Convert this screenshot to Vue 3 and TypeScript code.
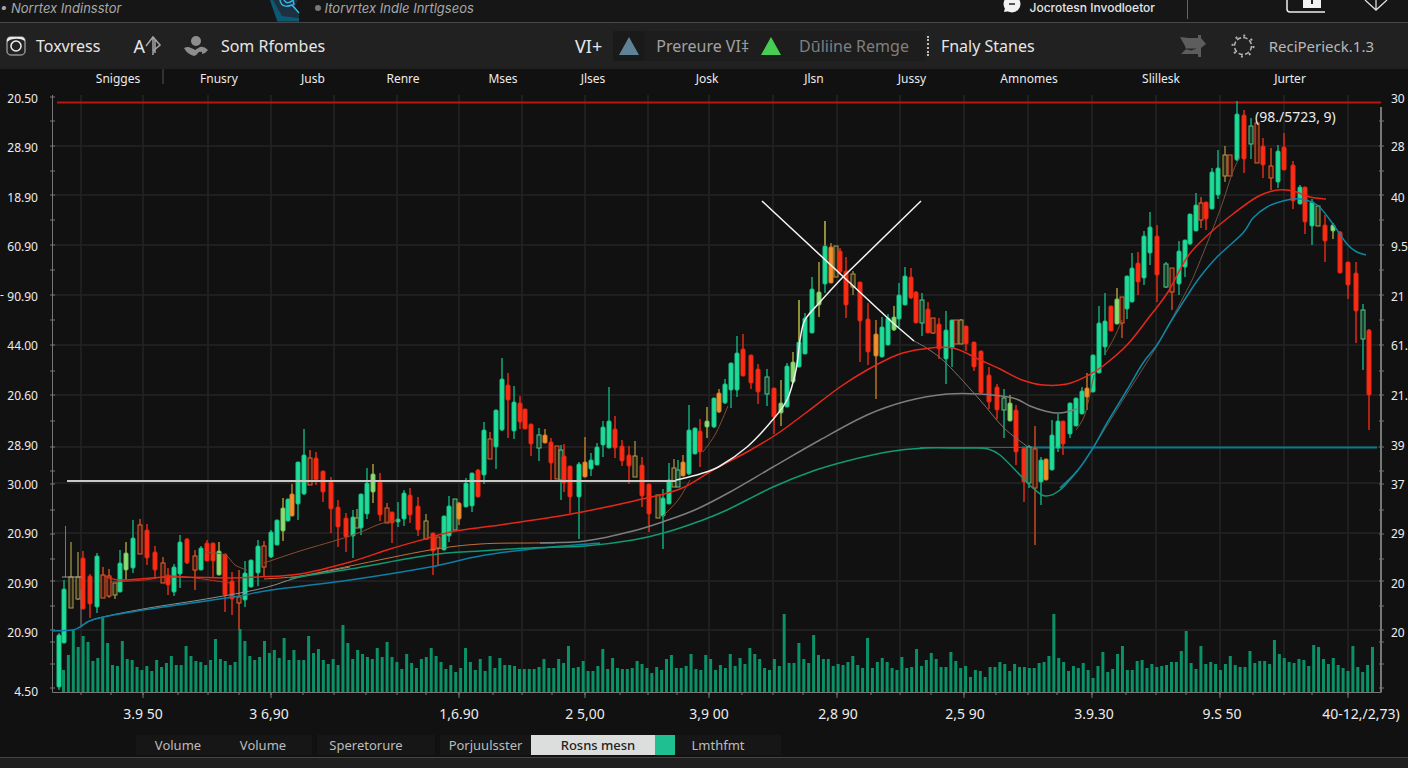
<script setup lang="ts">
type Kind = 'g' | 'r' | 'o' | 'l' | 'h' | 'k' | 'y'
type Candle = [x: number, high: number, top: number, bottom: number, low: number, kind: Kind]
type Point = [number, number]

// g/r: filled up/down, l: lime, o: orange, h/k/y: hollow orange, green, yellow
const candles: Candle[] = [
  [59, 633, 635, 687, 690, 'g'], [64, 580, 589, 643, 643, 'g'], [71, 542, 577, 608, 608, 'y'], [78, 552, 577, 599, 600, 'y'],
  [83, 551, 558, 609, 609, 'r'], [90, 574, 576, 604, 618, 'r'], [97, 553, 556, 607, 613, 'g'], [103, 567, 575, 598, 598, 'h'],
  [109, 569, 576, 596, 598, 'h'], [115, 583, 583, 595, 599, 'y'], [120, 550, 563, 592, 592, 'g'], [126, 542, 553, 570, 580, 'l'],
  [133, 520, 538, 568, 573, 'g'], [140, 519, 525, 554, 554, 'h'], [147, 524, 530, 558, 565, 'r'], [155, 546, 552, 570, 579, 'r'],
  [163, 557, 563, 583, 583, 'h'], [168, 568, 575, 585, 595, 'r'], [174, 564, 567, 592, 596, 'g'], [180, 535, 542, 574, 588, 'g'],
  [187, 538, 539, 563, 564, 'r'], [195, 550, 556, 570, 590, 'h'], [201, 546, 548, 570, 570, 'g'], [207, 540, 543, 561, 561, 'r'],
  [213, 543, 543, 561, 577, 'r'], [219, 542, 551, 575, 575, 'l'], [225, 554, 554, 595, 612, 'r'], [232, 572, 581, 599, 615, 'r'],
  [239, 570, 597, 603, 630, 'h'], [245, 561, 573, 600, 607, 'g'], [251, 560, 560, 587, 587, 'g'], [258, 540, 546, 573, 586, 'g'],
  [264, 541, 546, 567, 576, 'h'], [271, 530, 532, 557, 558, 'g'], [277, 520, 520, 545, 545, 'g'], [283, 498, 508, 531, 541, 'l'],
  [288, 499, 499, 521, 521, 'g'], [292, 484, 494, 516, 516, 'o'], [298, 462, 462, 504, 520, 'g'], [304, 429, 455, 494, 495, 'g'],
  [310, 450, 458, 485, 485, 'h'], [316, 452, 458, 480, 485, 'r'], [323, 471, 471, 492, 502, 'r'], [331, 477, 482, 509, 533, 'r'],
  [338, 500, 507, 527, 547, 'r'], [346, 513, 518, 537, 552, 'r'], [353, 510, 517, 536, 558, 'g'], [357, 509, 518, 528, 528, 'y'],
  [361, 494, 494, 528, 535, 'g'], [367, 468, 483, 514, 519, 'g'], [373, 464, 474, 492, 503, 'l'], [380, 473, 482, 515, 521, 'r'],
  [387, 503, 508, 523, 523, 'h'], [392, 512, 512, 523, 543, 'r'], [398, 502, 519, 522, 527, 'g'], [404, 490, 493, 519, 526, 'g'],
  [410, 488, 495, 515, 523, 'r'], [418, 497, 506, 530, 536, 'r'], [426, 514, 521, 539, 539, 'y'], [433, 533, 533, 551, 575, 'r'],
  [438, 537, 537, 548, 566, 'h'], [444, 516, 516, 550, 550, 'g'], [449, 496, 506, 536, 542, 'g'], [455, 499, 499, 530, 530, 'k'],
  [459, 502, 503, 519, 525, 'o'], [466, 478, 483, 507, 507, 'g'], [472, 473, 473, 506, 512, 'g'], [478, 469, 470, 497, 497, 'r'],
  [484, 422, 430, 475, 484, 'g'], [490, 432, 439, 459, 459, 'h'], [496, 410, 410, 447, 469, 'g'], [502, 358, 379, 430, 431, 'g'],
  [508, 373, 385, 400, 438, 'r'], [514, 386, 402, 431, 439, 'g'], [520, 396, 403, 422, 429, 'r'], [525, 409, 409, 429, 429, 'r'],
  [531, 424, 424, 444, 456, 'r'], [539, 428, 435, 448, 461, 'k'], [545, 429, 435, 443, 443, 'o'], [551, 438, 442, 463, 480, 'r'],
  [557, 446, 446, 479, 479, 'h'], [561, 445, 450, 480, 500, 'k'], [564, 444, 456, 483, 492, 'r'], [570, 466, 466, 497, 513, 'r'],
  [579, 462, 464, 497, 539, 'g'], [585, 437, 462, 477, 477, 'o'], [591, 453, 460, 469, 476, 'g'], [597, 443, 447, 465, 465, 'g'],
  [603, 421, 427, 445, 457, 'g'], [609, 387, 421, 448, 448, 'g'], [615, 416, 429, 448, 458, 'r'], [622, 440, 446, 461, 466, 'r'],
  [629, 446, 455, 466, 484, 'r'], [635, 441, 456, 477, 477, 'y'], [642, 457, 465, 496, 507, 'r'], [649, 484, 484, 514, 532, 'r'],
  [658, 495, 495, 518, 518, 'y'], [663, 489, 498, 516, 549, 'g'], [669, 463, 480, 504, 504, 'g'], [674, 459, 468, 487, 487, 'y'],
  [678, 460, 470, 487, 487, 'k'], [683, 455, 462, 476, 476, 'o'], [689, 405, 430, 474, 475, 'g'], [695, 428, 428, 454, 454, 'g'],
  [700, 419, 431, 452, 467, 'r'], [707, 407, 421, 427, 438, 'l'], [714, 398, 398, 427, 428, 'g'], [719, 389, 393, 412, 413, 'o'],
  [725, 379, 384, 403, 404, 'g'], [731, 363, 363, 390, 408, 'g'], [737, 336, 353, 390, 397, 'g'], [743, 334, 349, 376, 376, 'r'],
  [751, 355, 355, 383, 389, 'r'], [758, 364, 369, 392, 404, 'r'], [767, 369, 377, 394, 406, 'k'], [774, 388, 388, 417, 434, 'r'],
  [781, 380, 403, 413, 426, 'l'], [787, 363, 366, 407, 407, 'g'], [793, 352, 362, 382, 383, 'l'], [799, 300, 342, 367, 367, 'g'],
  [805, 313, 318, 354, 354, 'g'], [812, 277, 289, 333, 333, 'g'], [819, 262, 292, 305, 317, 'l'], [825, 221, 246, 284, 293, 'g'],
  [831, 243, 247, 283, 283, 'o'], [836, 246, 246, 277, 277, 'y'], [840, 248, 251, 272, 275, 'r'], [846, 257, 271, 305, 318, 'r'],
  [853, 271, 274, 287, 295, 'y'], [860, 282, 282, 321, 362, 'r'], [868, 303, 319, 352, 365, 'r'], [876, 320, 334, 356, 399, 'o'],
  [882, 317, 327, 357, 357, 'g'], [888, 314, 318, 345, 345, 'g'], [894, 306, 317, 330, 331, 'l'], [899, 283, 295, 319, 327, 'g'],
  [905, 267, 276, 305, 305, 'g'], [911, 268, 277, 298, 299, 'r'], [916, 291, 292, 323, 323, 'r'], [922, 293, 300, 323, 336, 'k'],
  [928, 302, 309, 333, 333, 'r'], [933, 318, 318, 333, 334, 'h'], [939, 318, 324, 349, 359, 'r'], [946, 311, 330, 359, 384, 'g'],
  [952, 320, 320, 348, 367, 'g'], [956, 320, 320, 344, 344, 'h'], [961, 319, 320, 344, 344, 'y'], [966, 326, 326, 344, 351, 'r'],
  [974, 342, 342, 367, 371, 'r'], [981, 351, 351, 393, 393, 'r'], [989, 367, 375, 402, 409, 'r'], [997, 384, 387, 410, 419, 'r'],
  [1004, 389, 398, 410, 438, 'k'], [1010, 395, 403, 421, 421, 'l'], [1016, 405, 410, 452, 465, 'r'], [1024, 448, 448, 482, 502, 'r'],
  [1029, 445, 447, 483, 488, 'k'], [1035, 426, 449, 488, 545, 'h'], [1041, 457, 460, 482, 505, 'g'], [1046, 459, 459, 480, 480, 'o'],
  [1052, 420, 435, 470, 470, 'g'], [1058, 414, 421, 448, 452, 'g'], [1063, 421, 421, 444, 455, 'r'], [1070, 403, 403, 434, 438, 'g'],
  [1076, 398, 398, 426, 426, 'g'], [1082, 387, 391, 414, 414, 'g'], [1087, 373, 388, 397, 410, 'o'], [1093, 355, 355, 392, 392, 'g'],
  [1099, 306, 323, 373, 373, 'g'], [1105, 293, 321, 347, 355, 'g'], [1111, 306, 306, 331, 331, 'r'], [1117, 288, 299, 324, 324, 'l'],
  [1122, 297, 297, 323, 338, 'h'], [1127, 276, 276, 309, 319, 'g'], [1132, 253, 268, 302, 302, 'g'], [1138, 252, 263, 282, 295, 'r'],
  [1144, 231, 236, 278, 285, 'g'], [1150, 212, 227, 253, 265, 'g'], [1157, 225, 236, 275, 302, 'r'], [1166, 262, 264, 287, 288, 'k'],
  [1172, 268, 268, 292, 310, 'h'], [1179, 241, 251, 284, 295, 'g'], [1185, 240, 240, 267, 277, 'g'], [1190, 214, 214, 244, 245, 'g'],
  [1196, 193, 205, 231, 231, 'g'], [1201, 197, 203, 220, 228, 'h'], [1206, 202, 202, 219, 230, 'r'], [1212, 168, 172, 209, 209, 'g'],
  [1218, 150, 168, 195, 199, 'g'], [1225, 146, 155, 176, 182, 'y'], [1230, 155, 155, 176, 176, 'h'], [1237, 101, 114, 160, 161, 'g'],
  [1244, 110, 115, 159, 173, 'r'], [1251, 118, 126, 144, 159, 'k'], [1257, 122, 123, 163, 163, 'h'], [1263, 138, 146, 165, 178, 'r'],
  [1271, 148, 166, 178, 190, 'h'], [1278, 145, 151, 182, 188, 'g'], [1284, 133, 147, 170, 170, 'r'], [1293, 161, 165, 201, 209, 'r'],
  [1300, 185, 187, 204, 204, 'g'], [1305, 187, 187, 222, 234, 'r'], [1312, 199, 202, 226, 245, 'g'], [1318, 205, 206, 226, 226, 'y'],
  [1325, 215, 225, 241, 262, 'r'], [1333, 223, 225, 231, 239, 'l'], [1340, 231, 232, 273, 273, 'r'], [1348, 262, 262, 285, 299, 'r'],
  [1356, 262, 273, 311, 343, 'r'], [1363, 304, 310, 339, 370, 'k'], [1369, 329, 330, 395, 430, 'r'],
]

const wickColor: Record<Kind, string> = { g: '#12a87c', r: '#e02a14', o: '#b87524', l: '#a39b3c', h: '#c9481f', k: '#12a87c', y: '#8d8040' }
const bodyFill: Record<Kind, string> = { g: '#1fdc98', r: '#fb2c14', o: '#f0912e', l: '#8fdc72', h: '#3a1710', k: '#14402f', y: '#2b2a18' }
const bodyLine: Record<Kind, string> = { g: '#17c98a', r: '#e92712', o: '#d98029', l: '#6fc765', h: '#f0602a', k: '#5fc083', y: '#b59a4a' }

const volumes = [
  22, 37, 62, 45, 56, 50, 31, 34, 74, 49, 27, 26, 51, 33, 32, 25, 22, 26, 21, 32, 25, 29, 36, 27, 27, 46, 36, 31, 30, 27, 32, 53, 33, 31, 27, 30,
  63, 51, 36, 32, 35, 51, 39, 42, 34, 54, 32, 42, 32, 32, 56, 39, 43, 32, 28, 33, 27, 67, 49,
  33, 42, 38, 35, 33, 44, 35, 50, 35, 30, 23, 38, 29, 24, 33, 35, 44, 36, 30, 23, 27, 20, 24, 44, 30, 22, 33, 21, 36, 24, 34, 27, 27, 26, 23, 23,
  23, 23, 25, 33, 24, 24, 33, 29, 46, 24, 25, 31, 21, 21, 26, 43, 23, 34, 24, 23, 23, 24, 31, 28, 24, 19, 25, 22, 33, 37, 24, 24, 26, 38, 23, 22,
  37, 33, 22, 27, 24, 38, 26, 34, 28, 44, 38, 33, 24, 22, 33, 26, 78, 29, 29, 49,
  33, 29, 57, 37, 33, 33, 26, 28, 27, 30, 36, 27, 24, 54, 24, 30, 34, 30, 24, 22, 35, 24, 25, 43, 26, 32, 39, 33, 25, 25, 40, 31, 24, 26, 15, 22,
  21, 15, 25, 25,
  30, 28, 21, 28, 25, 25, 24, 24, 29, 30, 36, 78, 34, 30, 21, 26, 24, 29, 22, 14, 26, 40, 20, 23, 38, 46, 22, 22, 31, 32, 24, 28, 25, 26, 27, 30,
  30, 41, 61, 29, 23, 46, 28, 30, 28, 22, 28, 36, 27, 25, 25, 41, 29, 31, 31, 28, 52, 38, 34, 30, 29, 33, 32, 26, 47, 45, 33, 28, 34, 27, 24, 21,
  46, 25, 20, 27, 45,
]
const volumeX = (i: number): number => 63 + (1309 * i) / (volumes.length - 1)

// Catmull-Rom spline through the given points
function smooth(p: Point[]): string {
  let d = `M${p[0][0]} ${p[0][1]}`
  for (let i = 0; i < p.length - 1; i++) {
    const a = p[Math.max(i - 1, 0)]
    const b = p[i]
    const c = p[i + 1]
    const e = p[Math.min(i + 2, p.length - 1)]
    d += `C${b[0] + (c[0] - a[0]) / 6} ${b[1] + (c[1] - a[1]) / 6} ${c[0] - (e[0] - b[0]) / 6} ${c[1] - (e[1] - b[1]) / 6} ${c[0]} ${c[1]}`
  }
  return d
}

const lines: { color: string; width: number; points: Point[] }[] = [
  { color: '#9aa29c', width: 1, points: [[62, 577], [82, 577]] },
  { color: '#85502f', width: 1, points: [[205, 552], [225, 555], [235, 565], [247, 570]] },
  { color: '#85502f', width: 1, points: [[264, 563], [300, 551], [350, 536], [380, 524], [397, 520]] },
  { color: '#85502f', width: 1, points: [[663, 516], [678, 500], [690, 480]] },
  { color: '#85502f', width: 1, points: [[703, 452], [716, 433], [728, 406]] },
  { color: '#85502f', width: 1, points: [[1076, 430], [1085, 414], [1094, 375]] },
  { color: '#85502f', width: 1, points: [[1105, 354], [1114, 338], [1122, 320]] },
  { color: '#7b7268', width: 1, points: [[914, 341], [928, 349], [947, 364], [980, 400], [1004, 428], [1028, 447]] },
  { color: '#6d5544', width: 1, points: [[1093, 448], [1128, 392], [1158, 344], [1187, 290], [1198, 266], [1220, 210], [1232, 174], [1240, 156]] },
  { color: '#8f938d', width: 1, points: [[80, 627], [95, 619], [143, 609], [200, 600], [245, 592], [271, 586], [300, 577], [350, 567]] },
  { color: '#0b7fa5', width: 2, points: [[52, 631], [72, 630], [80, 627], [95, 619], [143, 610], [233, 597], [271, 590], [350, 580], [430, 567], [480, 556], [540, 548], [600, 543]] },
  { color: '#c2703a', width: 1, points: [[264, 579], [300, 576], [350, 566], [430, 550], [480, 544], [530, 543], [555, 543]] },
  { color: '#7d7d7d', width: 2, points: [[540, 543], [585, 541], [633, 531], [668, 520], [697, 509], [730, 492], [773, 467], [820, 440], [867, 415], [907, 401], [947, 394], [980, 394], [1013, 398], [1030, 406], [1045, 411], [1060, 413], [1077, 409]] },
  { color: '#0f9a73', width: 2, points: [[290, 578], [350, 569], [430, 555], [480, 551], [530, 548], [585, 546], [633, 540], [667, 532], [700, 521], [727, 510], [773, 487], [813, 471], [847, 461], [887, 452], [925, 448], [960, 448], [975, 448], [988, 449], [1000, 455], [1020, 475], [1033, 488], [1045, 496], [1060, 490], [1078, 470]] },
  { color: '#0d87a6', width: 2, points: [[1060, 488], [1078, 470], [1093, 448], [1107, 423], [1127, 390], [1143, 363], [1157, 345], [1170, 323], [1187, 296], [1200, 277], [1217, 257], [1243, 233], [1253, 218], [1267, 207], [1283, 201], [1300, 199], [1317, 205], [1330, 220], [1347, 244], [1357, 252], [1366, 255]] },
  { color: '#c23420', width: 1, points: [[110, 582], [145, 580], [175, 576], [230, 583]] },
  { color: '#e5281a', width: 2, points: [[103, 575], [120, 580], [170, 577], [230, 578], [258, 577], [300, 574], [350, 562], [390, 549], [425, 539], [455, 531], [500, 525], [571, 514], [634, 501], [680, 489], [713, 470], [747, 452], [777, 434], [807, 412], [840, 387], [867, 370], [897, 355], [923, 349], [953, 348], [980, 360], [1000, 369], [1022, 380], [1043, 385], [1067, 384], [1087, 376], [1103, 366], [1127, 345], [1150, 316], [1168, 292], [1188, 256], [1210, 233], [1233, 214], [1257, 197], [1277, 190], [1293, 191], [1310, 197], [1326, 199]] },
  { color: '#f0f0ee', width: 2, points: [[676, 480], [700, 474], [720, 466], [747, 447], [770, 423], [787, 400], [796, 370], [800, 340], [805, 320], [820, 302], [842, 278]] },
]

const gridX = [81, 143, 208, 271, 334, 397, 459, 522, 585, 648, 709, 773, 837, 900, 964, 1028, 1092, 1156, 1220, 1284, 1348]
const gridY = [146, 195, 245, 295, 345, 395, 447, 483, 533, 581, 630]
const longTicks = [143, 271, 459, 585, 709, 837, 964, 1092, 1220, 1348]
const minorX = [111, 178, 239, 303, 366, 426, 493, 552, 620, 677, 742, 803, 871, 931, 996, 1057, 1126, 1186, 1253, 1312]
const ticksY = [97, 121, 146, 171, 195, 220, 245, 270, 295, 320, 345, 371, 395, 421, 447, 471, 484, 510, 534, 559, 581, 606, 630, 642, 664, 688]

const months: [number, string][] = [
  [118, 'Snigges'], [219, 'Fnusry'], [313, 'Jusb'], [403, 'Renre'], [503, 'Mses'], [593, 'Jlses'],
  [707, 'Josk'], [814, 'Jlsn'], [912, 'Jussy'], [1029, 'Amnomes'], [1161, 'Slillesk'], [1290, 'Jurter'],
]
const leftLabels: [number, string][] = [
  [98, '20.50'], [147, '28.90'], [197, '18.90'], [246, '60.90'], [296, '90.90'], [345, '44.00'], [395, '20.60'],
  [445, '28.90'], [484, '30.00'], [533, '20.90'], [583, '20.90'], [632, '20.90'], [691, '4.50'],
]
const rightLabels: [number, string][] = [
  [98, '30'], [146, '28'], [197, '40'], [246, '9.5'], [296, '21'], [345, '61.'], [395, '21.'], [445, '39'],
  [484, '37'], [533, '29'], [583, '20'], [632, '20'],
]
const bottomLabels: [number, string][] = [
  [143, '3.9 50'], [269, '3 6,90'], [459, '1,6.90'], [585, '2 5,00'], [709, '3,9 00'], [838, '2,8 90'],
  [965, '2,5 90'], [1094, '3.9.30'], [1222, '9.S 50'], [1361, '40-12,/2,73)'],
]
</script>

<template>
  <div class="app">
    <header class="titlebar">
      <span class="title first">• Norrtex Indinsstor</span>
      <svg class="logo" width="34" height="22" viewBox="0 0 34 22" aria-hidden="true">
        <path d="M2 0 9 21.500H31V13L27 6 30 0Z" fill="#1c303d" />
        <path d="M2 0 9.500 21.500H31V18L14 16 5 0Z" fill="#0d5873" />
        <path d="M12 0C13 7 19 7 24 5L31 13M16 0C18 4 22 3 25 0L26 5" fill="none" stroke="#35b5e8" stroke-width="1.500" />
      </svg>
      <span class="title second"><i class="dot"></i>Itorvrtex Indle Inrtlgseos</span>
      <span class="account">
        <svg width="18" height="14" viewBox="0 0 18 14" aria-hidden="true">
          <circle cx="9" cy="4" r="8.500" fill="#f2f2f2" /><path d="M2 8 1 12 7 11Z" fill="#f2f2f2" />
          <path d="M6 4H12" stroke="#222" stroke-width="1.500" />
        </svg>
        Jocrotesn Invodloetor
      </span>
      <span class="corner">
        <svg width="40" height="14" viewBox="0 0 40 14" aria-hidden="true">
          <path d="M1 0V9Q1 12 4 12H39" fill="none" stroke="#eee" stroke-width="1.500" />
          <path d="M17 0H35V8H17Z" fill="#f2f2f2" /><path d="M26 0V4" stroke="#222" stroke-width="2" />
        </svg>
        <svg width="24" height="14" viewBox="0 0 24 14" aria-hidden="true">
          <path d="M1 0 12 10 23 0M12 0V10" fill="none" stroke="#ddd" stroke-width="1.300" />
        </svg>
      </span>
    </header>

    <nav class="toolbar">
      <div class="left">
        <button class="tool">
          <svg width="20" height="22" viewBox="0 0 20 22" aria-hidden="true">
            <rect x="1" y="2" width="18" height="18" rx="4" fill="#222" stroke="#8f8f8f" stroke-width="1.500" />
            <path d="M1 7V5Q1 2 5 2H15Q19 2 19 6Q14 3 8 4Q4 4 1 7Z" fill="#e8e8e8" />
            <circle cx="10" cy="11" r="5" fill="none" stroke="#f0f0f0" stroke-width="1.500" />
          </svg>
          Toxvress
        </button>
        <button class="tool letter">A<svg width="16" height="22" viewBox="0 0 16 22" aria-hidden="true">
          <path d="M1 11 8 2 15 10 8 16M8 2V20M10 5V18" fill="none" stroke="#a5a5a5" stroke-width="1.500" />
        </svg></button>
        <button class="tool people">
          <svg width="24" height="22" viewBox="0 0 24 22" aria-hidden="true">
            <circle cx="12" cy="6" r="5" fill="#8d8d8d" />
            <path d="M0 13Q4 11 7 13Q10 14 11 15L16 12Q20 11 24 15Q22 18 18 19L18 17Q15 16 14 18Q12 21 10 21Q3 19 0 13Z" fill="#8d8d8d" />
          </svg>
          Som Rfombes
        </button>
      </div>
      <div class="middle">
        <button class="tool big">VI+</button>
        <button class="chip" aria-label="Trend">
          <svg width="20" height="18" viewBox="0 0 20 18" aria-hidden="true"><path d="M10 0 20 18H0Z" fill="#5e8396" /></svg>
        </button>
        <div class="range">
          <button class="tool dim">Prereure VI‡</button>
          <svg width="20" height="18" viewBox="0 0 20 18" aria-hidden="true"><path d="M10 0 20 18H0Z" fill="#46cd52" /></svg>
          <button class="tool dim dull">Dūliine Remge</button>
        </div>
        <button class="tool stanes">Fnaly Stanes</button>
      </div>
      <div class="right">
        <svg width="26" height="24" viewBox="0 0 26 24" aria-hidden="true">
          <path d="M0 3 9 4 18 4V1H21V4L26 10 21 14V23H18V20H1L6 15 5 12Z" fill="#5d5d5d" />
          <path d="M3 14.500H17L11 16.500Z" fill="#262626" />
        </svg>
        <svg width="24" height="24" viewBox="0 0 24 24" aria-hidden="true">
          <circle cx="12" cy="12" r="8.500" fill="none" stroke="#b4b4b4" stroke-width="1.500" stroke-dasharray="4.500 2.170" />
          <circle cx="12" cy="12" r="10.500" fill="none" stroke="#b4b4b4" stroke-width="2" stroke-dasharray="2 6.240" />
        </svg>
        <button class="tool version">ReciPerieck.1.3</button>
      </div>
    </nav>

    <main>
      <svg class="chart" viewBox="0 69 1408 661" role="img" aria-label="Price chart with volume">
        <path d="M163 69V84" stroke="#555" />
        <g class="grid">
          <line v-for="x in gridX" :key="'gx' + x" :x1="x" :x2="x" y1="95" y2="692" />
          <line v-for="y in gridY" :key="'gy' + y" x1="53" x2="1380" :y1="y" :y2="y" />
        </g>
        <rect v-for="(h, i) in volumes" :key="'v' + i" :x="volumeX(i) - 1" :y="692 - h" width="3" :height="h" fill="#0a9167" />
        <g class="axis">
          <path d="M52.500 95V692.500H1381" />
          <path d="M1381 107V692.500" stroke-width="2" />
          <line v-for="y in ticksY" :key="'tl' + y" x1="50" x2="55" :y1="y" :y2="y" />
          <line v-for="y in ticksY.slice(1)" :key="'tr' + y" x1="1379" x2="1384" :y1="y" :y2="y" />
          <line v-for="x in gridX" :key="'tx' + x" :x1="x" :x2="x" y1="693" y2="695" />
          <line v-for="x in minorX" :key="'tm' + x" :x1="x" :x2="x" y1="693" y2="695" />
          <line v-for="x in longTicks" :key="'tg' + x" :x1="x" :x2="x" y1="693" y2="698" />
        </g>
        <path d="M57 102.500H1381" stroke="#bd140e" stroke-width="2" />
        <path d="M1022 447.500H1377" stroke="#087a96" stroke-width="2" />
        <path d="M920 447.500H1022" stroke="#087a78" />
        <g v-for="(c, i) in candles" :key="'c' + i">
          <line :x1="c[0]" :x2="c[0]" :y1="c[1]" :y2="c[4]" :stroke="wickColor[c[5]]" stroke-width="1.500" />
          <rect v-if="'hky'.includes(c[5])" :x="c[0] - 2" :y="c[2]" width="4" :height="c[3] - c[2]" :fill="bodyFill[c[5]]" :stroke="bodyLine[c[5]]" />
          <rect v-else :x="c[0] - 2" :y="c[2]" width="4" :height="c[3] - c[2]" rx="1" :fill="bodyFill[c[5]]" :stroke="bodyLine[c[5]]" />
        </g>
        <path d="M825 221V245M799 300V341" stroke="#b8962e" stroke-width="1.500" />
        <path d="M65.500 526V577M81 590V626" stroke="#777" fill="none" />
        <path v-for="(l, i) in lines" :key="'l' + i" :d="smooth(l.points)" fill="none" :stroke="l.color" :stroke-width="l.width === 2 ? 1.5 : 1" />
        <path d="M67 481H676" stroke="#c9c9c7" stroke-width="2" />
        <path d="M762 201 893 323 914 341M842 278 921 201" fill="none" stroke="#f4f4f2" stroke-width="1.500" />
        <g class="small">
          <text v-for="m in months" :key="m[1]" :x="m[0]" y="83" text-anchor="middle">{{ m[1] }}</text>
          <text v-for="l in leftLabels" :key="'ll' + l[0]" x="38" :y="l[0] + 5" text-anchor="end">{{ l[1] }}</text>
          <text v-for="l in rightLabels" :key="'rl' + l[0]" x="1391" :y="l[0] + 5">{{ l[1] }}</text>
          <text x="0" y="299">‐</text>
        </g>
        <g class="dates">
          <text x="1255" y="122">(98./5723, 9)</text>
          <text v-for="l in bottomLabels" :key="l[1]" :x="l[0]" y="719" text-anchor="middle">{{ l[1] }}</text>
        </g>
      </svg>
    </main>

    <div class="tabs">
      <button class="tab volume">Volume</button>
      <button class="tab volume next">Volume</button>
      <button class="tab speed">Speretorure</button>
      <button class="tab per">Porjuulsster</button>
      <button class="tab active">Rosns mesn</button>
      <button class="tab last">Lmthfmt</button>
    </div>
    <footer></footer>
  </div>
</template>

<style>
body { background: #111; }
</style>

<style scoped>
.app {
  min-height: 100vh;
  display: flex;
  flex-direction: column;
  overflow: hidden;
  background: #111;
  color: #e6e6e6;
  font-family: "Noto Sans", "Open Sans", sans-serif;
}
button { border: 0; padding: 0; background: none; color: inherit; font: inherit; white-space: nowrap; cursor: pointer; }
.titlebar {
  display: flex;
  align-items: flex-start;
  height: 22px;
  border-bottom: 1px solid #484848;
  background: #161616;
  font-family: Inter, "Noto Sans", sans-serif;
  font-size: 13px;
  line-height: 16px;
  white-space: nowrap;
}
.title { color: #a8a8a8; font-style: italic; }
.first { flex: 0 0 19%; }
.logo { flex: none; }
.second { display: flex; align-items: center; gap: 4px; margin-left: 13px; }
.dot { width: 6px; height: 6px; border-radius: 50%; background: #777; }
.account {
  display: flex;
  gap: 9px;
  margin-left: auto;
  height: 19px;
  padding-right: 32px;
  border-right: 1px solid #666;
  font-size: 12px;
  font-weight: 500;
}
.corner { display: flex; gap: 38px; flex: 0 0 122px; padding-left: 98px; }
.toolbar {
  display: flex;
  align-items: center;
  height: 46px;
  background: #212121;
  font-size: 16px;
  line-height: 24px;
}
.left { display: flex; flex: 0 0 575px; align-items: center; padding-left: 6px; box-sizing: border-box; }
.tool { display: flex; align-items: center; }
.left .tool { gap: 10px; }
.left .letter { gap: 0; margin-left: 33px; font-size: 18px; }
.left .people { gap: 13px; margin-left: 23px; }
.middle { display: flex; align-items: center; }
.big { font-size: 18px; }
.chip { display: flex; justify-content: center; align-items: center; width: 32px; height: 30px; margin-left: 11px; border-radius: 2px; background: #1a1a1a; }
.range { display: flex; align-items: center; height: 30px; padding: 0 16px 0 11px; gap: 12px; background: #1d1d1d; }
.dim { color: #a2a2a2; }
.dull { margin-left: 6px; color: #7f7f7f; }
.stanes { margin-left: 2px; padding-left: 12px; border-left: 2px dotted #bbb; line-height: 20px; }
.right { display: flex; align-items: center; gap: 25px; margin-left: auto; padding-right: 34px; }
.version { margin-left: -11px; color: #b8b8b8; font-size: 15px; }
.chart { display: block; width: 100%; height: auto; }
.grid line { stroke: #242424; stroke-width: 1.5; }
.axis { fill: none; stroke: #777; }
.small { fill: #ececec; font-size: 12px; }
.dates { fill: #ececec; font-size: 14px; }
.tabs { display: flex; align-items: center; margin: 5px 0 2px 136px; font-size: 13px; line-height: 20px; color: #bcbcbc; }
.tab { height: 20px; background: #161616; }
.volume { width: 84px; }
.next { width: 92px; margin-right: 5px; padding-right: 6px; }
.speed { width: 118px; padding-right: 20px; margin-right: 5px; }
.per { width: 91px; }
.active { width: 144px; box-sizing: border-box; padding-left: 10px; border-right: 20px solid #1fbf92; background: #dcdedd; color: #222; font-weight: 500; }
.last { width: 106px; padding-right: 20px; }
footer { flex: 1; min-height: 10px; border-top: 1px solid #444; background: #1f1f1f; }
</style>
